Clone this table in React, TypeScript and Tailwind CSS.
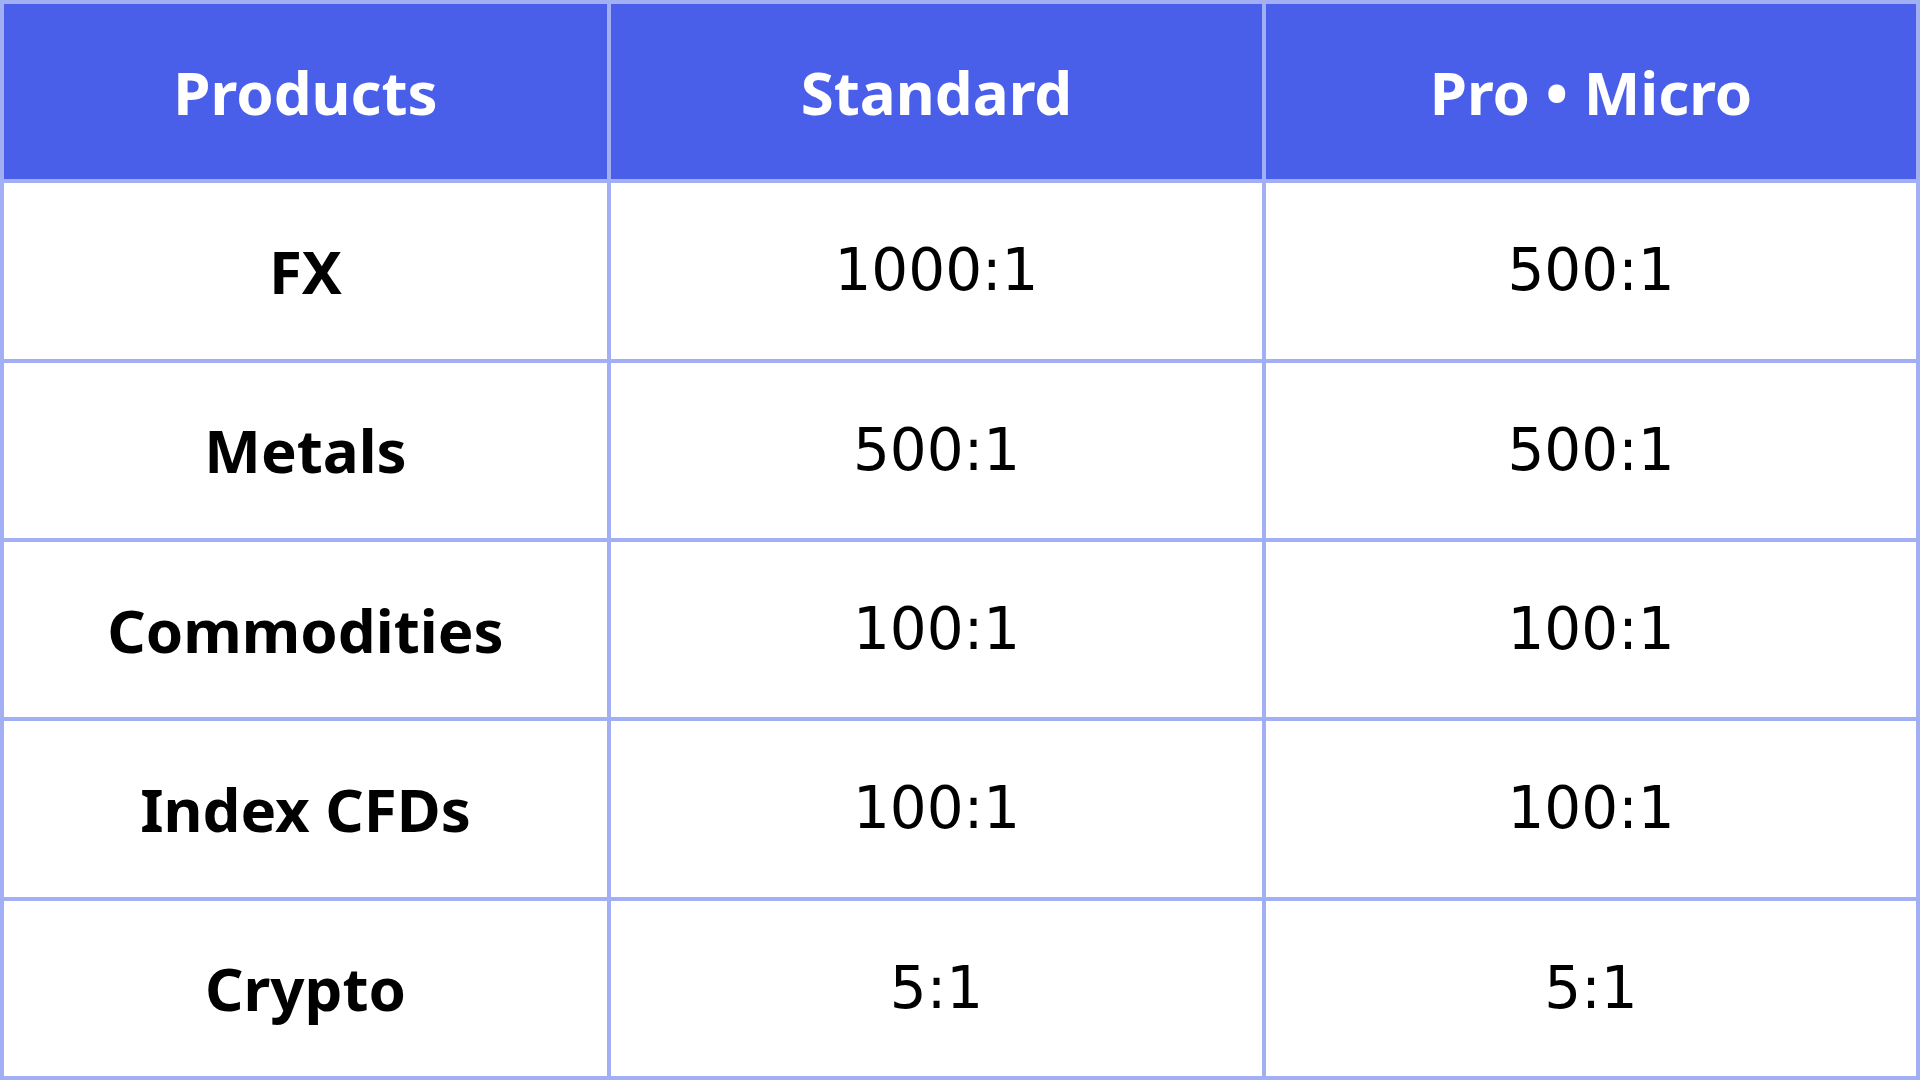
import { Fragment } from "react"

const rows: [string, string, string][] = [
  ["FX", "1000:1", "500:1"],
  ["Metals", "500:1", "500:1"],
  ["Commodities", "100:1", "100:1"],
  ["Index CFDs", "100:1", "100:1"],
  ["Crypto", "5:1", "5:1"],
]

const headers = ["Products", "Standard", "Pro • Micro"]

export default function App() {
  return (
    <div className="w-[1920px] h-[1080px] bg-[#a2aff5] p-1 grid gap-1 grid-cols-[603px_651px_650px] grid-rows-6 text-black font-['Noto_Sans',sans-serif]">
      {headers.map((h) => (
        <div
          key={h}
          className="bg-[#4a5fe9] flex items-center justify-center text-white font-bold text-[60px]"
        >
          {h}
        </div>
      ))}
      {rows.map((r) => (
        <Fragment key={r[0]}>
          <div className="bg-white flex items-center justify-center font-bold text-[60px]">
            {r[0]}
          </div>
          <div className="bg-white flex items-center justify-center text-[58px] font-['DejaVu_Sans',sans-serif]">
            {r[1]}
          </div>
          <div className="bg-white flex items-center justify-center text-[58px] font-['DejaVu_Sans',sans-serif]">
            {r[2]}
          </div>
        </Fragment>
      ))}
    </div>
  )
}
